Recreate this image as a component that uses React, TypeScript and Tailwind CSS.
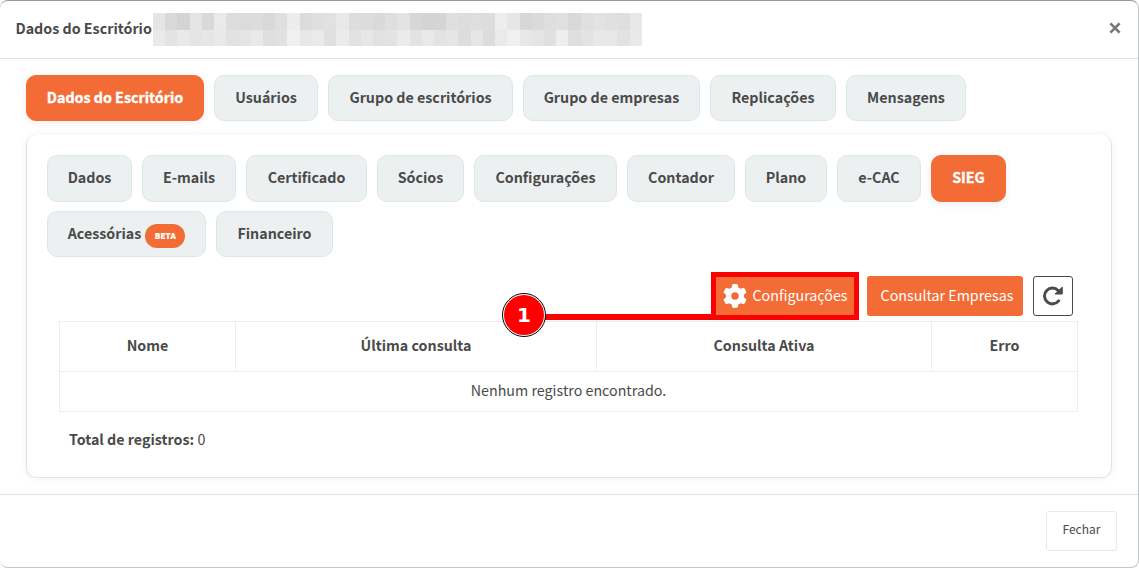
import React from "react";
import { FaGear } from "react-icons/fa6";

const mosaicTop =
  "e5 d9 d4 e5 d9 ea dd db dc d8 df ec db df e1 e9 dd dc d9 df e3 d7 d4 d5 df dd de dd ed e6 d7 da de e0 d8 e0 e3 e0 de e8".split(" ");
const mosaicBottom =
  "ea e3 e9 e4 e6 e9 e2 e4 e9 df e1 f0 e7 ea e0 eb e2 e7 e1 e3 eb e3 e9 e3 e5 dd e6 dc ea f0 e7 e4 e0 ee df e3 e8 e8 e2 e9".split(" ");

function MosaicRow({ shades, className }: { shades: string[]; className: string }) {
  return (
    <div className={`flex ${className}`}>
      {shades.map((s, i) => (
        <span key={i} className="h-full flex-1" style={{ backgroundColor: `#${s}${s}${s}` }} />
      ))}
    </div>
  );
}

function RefreshIcon() {
  return (
    <svg width="20" height="20" viewBox="0 0 20 20" fill="none">
      <path d="M15.2 4.6A7.9 7.9 0 1 0 15.6 14.9" stroke="currentColor" strokeWidth="3" strokeLinecap="round" />
      <path d="M18.8.9c.5-.4 1-.2 1 .4v6.2c0 .6-.4 1-1 1h-6.300c-.7 0-.9-.6-.5-1z" fill="currentColor" />
    </svg>
  );
}

function Tab({ label, width, height = "h-[46px] pb-[3px]", active, badge }: {
  label: string; width: string; height?: string; active?: boolean; badge?: string;
}) {
  return (
    <button
      className={`${width} ${height} flex shrink-0 items-center justify-center rounded-[10px] border text-[14.28px] font-bold whitespace-nowrap ${
        active
          ? "border-[#f36c36] bg-[#f36c36] text-white shadow-[0_2px_8px_rgba(0,0,0,0.07)] [-webkit-text-stroke:0.35px_white]"
          : "border-[#dce7e8] bg-[#ecf0f1] text-[#4a4a4a]"
      }`}
    >
      {label}
      {badge && (
        <span className="mt-1.5 ml-1 flex h-6 w-10 items-center justify-center rounded-full bg-[#f36c36] text-[8px] font-black tracking-[0.1px] text-white [-webkit-text-stroke:0.2px_white]">
          {badge}
        </span>
      )}
    </button>
  );
}

export default function App() {
  return (
    <div className="h-[569px] w-[1139px] overflow-hidden bg-white font-['Noto_Sans_CJK_SC','Source_Sans_Pro',sans-serif] text-[14.28px] text-[#4a4a4a]">
      <div className="flex h-[568px] flex-col rounded-lg border border-l-0 border-[#c4c6c7] border-t-[#999] bg-white">
        <header className="flex h-[58px] shrink-0 items-center justify-between border-b border-[#dfe1e2] pr-[17px] pl-[15.5px]">
          <div className="flex items-center">
            <h1 className="w-[137.5px] pb-1 font-bold whitespace-nowrap">Dados do Escritório</h1>
            <div className="w-[489px]">
              <MosaicRow shades={mosaicTop} className="h-[17px]" />
              <MosaicRow shades={mosaicBottom} className="h-4" />
            </div>
          </div>
          <svg width="12" height="12" viewBox="0 0 12 12" className="mb-[3px] text-[#777]">
            <path d="M1.4 1.4 10.6 10.6M10.6 1.4 1.4 10.6" stroke="currentColor" strokeWidth="2.7" />
          </svg>
        </header>

        <main className="flex h-[436px] shrink-0 flex-col border-b border-[#dfe1e2] px-[26px] pt-4">
          <nav className="flex gap-[10px]">
            <Tab label="Dados do Escritório" width="w-[178px]" active />
            <Tab label="Usuários" width="w-[104px]" />
            <Tab label="Grupo de escritórios" width="w-[185px]" />
            <Tab label="Grupo de empresas" width="w-[177px]" />
            <Tab label="Replicações" width="w-[126px]" />
            <Tab label="Mensagens" width="w-[120px]" />
          </nav>

          <section className="mt-[14px] h-[343px] w-[1086px] rounded-[10px] border border-t-0 border-[#dce7e8] px-5 pt-5 shadow-[0_0_9px_rgba(0,0,0,0.06)]">
            <nav className="flex flex-wrap gap-x-[10px] gap-y-[9px]">
              <Tab label="Dados" width="w-[85px]" height="h-[47px] pb-[3px]" />
              <Tab label="E-mails" width="w-[94px]" height="h-[47px] pb-[3px]" />
              <Tab label="Certificado" width="w-[121px]" height="h-[47px] pb-[3px]" />
              <Tab label="Sócios" width="w-[87px]" height="h-[47px] pb-[3px]" />
              <Tab label="Configurações" width="w-[143px]" height="h-[47px] pb-[3px]" />
              <Tab label="Contador" width="w-[108px]" height="h-[47px] pb-[3px]" />
              <Tab label="Plano" width="w-[82px]" height="h-[47px] pb-[3px]" />
              <Tab label="e-CAC" width="w-[84px]" height="h-[47px] pb-[3px]" />
              <Tab label="SIEG" width="w-[75px]" height="h-[47px] pb-[3px]" active />
              <Tab label="Acessórias" width="w-[159px]" badge="BETA" />
              <Tab label="Financeiro" width="w-[117px]" />
            </nav>

            <div className="mt-4 mr-[18px] flex h-12 items-start justify-end gap-[10px]">
              <div className="relative -mt-px -mr-[2px] h-12 w-[148px] border-[5px] border-[#ff0000]">
                <button className="flex h-full w-full items-center justify-center gap-[5px] bg-[#f36c36] pl-px text-white">
                  <FaGear size={24} />
                  <span className="pb-0.5">Configurações</span>
                </button>
                <span className="absolute top-[37px] -left-[173px] h-[6px] w-[170px] bg-[#ff0000]" />
                <span className="absolute top-[16px] -left-[214px] flex size-[44px] items-center justify-center rounded-full border-[1.5px] border-black bg-white p-px">
                  <span className="flex size-full items-center justify-center rounded-full bg-[#ff0000] font-['DejaVu_Sans',sans-serif] text-[20px] font-bold text-white">
                    1
                  </span>
                </span>
              </div>
              <button className="mt-[3px] flex h-10 w-[156px] items-center justify-center rounded-[3px] bg-[#f36c36] pb-0.5 pl-1 text-white">
                Consultar Empresas
              </button>
              <button className="mt-[3px] flex size-10 items-center justify-center rounded-[3px] border border-[#4a4a4a]">
                <RefreshIcon />
              </button>
            </div>

            <table className="ml-3 w-[1019px] table-fixed border-collapse text-center">
              <thead>
                <tr className="h-[50px]">
                  <th className="w-[176px] border border-[#ebedee] pb-1 font-bold">Nome</th>
                  <th className="w-[361px] border border-[#ebedee] pb-1 font-bold">Última consulta</th>
                  <th className="w-[335px] border border-[#ebedee] pb-1 font-bold">Consulta Ativa</th>
                  <th className="border border-[#ebedee] pb-1 font-bold">Erro</th>
                </tr>
              </thead>
              <tbody>
                <tr className="h-10">
                  <td colSpan={4} className="border border-[#ebedee] pb-1">Nenhum registro encontrado.</td>
                </tr>
              </tbody>
            </table>
            <p className="mt-4 ml-[22px]">
              <b>Total de registros:</b> 0
            </p>
          </section>
        </main>

        <footer className="flex flex-1 items-start justify-end pt-4 pr-[21px]">
          <button className="flex h-10 w-[71px] items-center justify-center rounded-[3px] border border-[#e7e9ea] pb-1 text-[12px]">
            Fechar
          </button>
        </footer>
      </div>
    </div>
  );
}
